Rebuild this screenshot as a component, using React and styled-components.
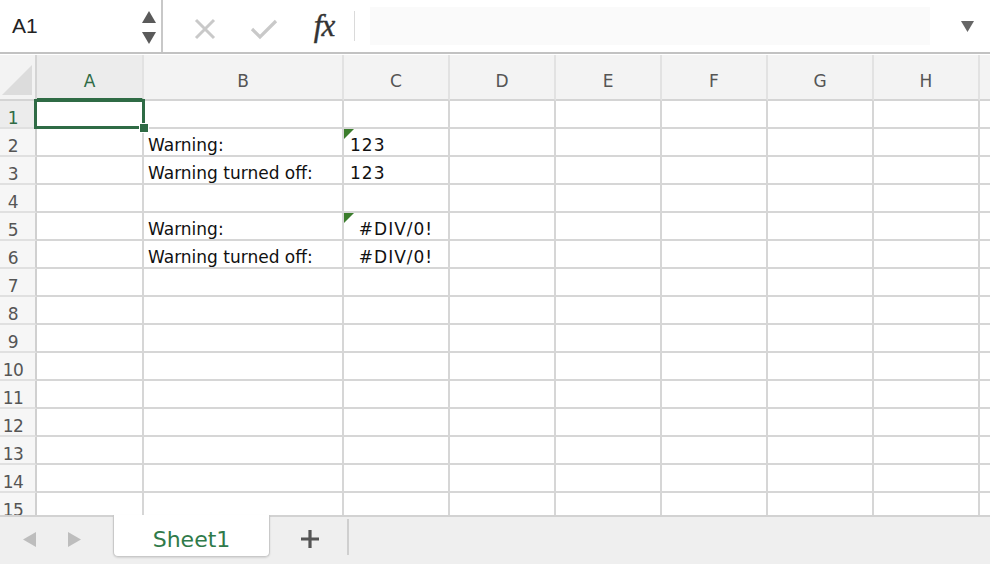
import React from "react";
import styled, { createGlobalStyle } from "styled-components";

const Global = createGlobalStyle`
  html, body { margin: 0; padding: 0; background: #fff; }
  body { font-family: "DejaVu Sans", "Noto Sans", sans-serif; }
  #root { width: 990px; height: 564px; }
`;

const Frame = styled.div`
  width: 990px;
  height: 564px;
  display: flex;
  flex-direction: column;
  overflow: hidden;
  background: #fff;
`;

const TopBar = styled.div`
  height: 52px;
  flex: none;
  display: flex;
  align-items: stretch;
  border-bottom: 2px solid #c2c2c2;
  position: relative;
  z-index: 3;
  box-shadow: 0 1px 0 #fff;
`;

const NameBox = styled.div`
  width: 163px;
  flex: none;
  display: flex;
  align-items: center;
  justify-content: space-between;
  padding: 0 5px 0 12px;
  box-sizing: border-box;
  border-right: 2px solid #c8c8c8;
  font-family: "Liberation Sans", "Noto Sans", sans-serif;
  font-size: 21px;
  color: #222;
`;

const Spinner = styled.div`
  display: flex;
  flex-direction: column;
  gap: 9px;
  padding-top: 2px;
`;

const FormulaTools = styled.div`
  display: flex;
  align-items: center;
  padding-left: 28px;
`;

const ToolIcon = styled.div`
  width: ${(p) => p.$w}px;
  display: flex;
  justify-content: center;
  align-items: center;
  padding-top: ${(p) => p.$pt || 0}px;
`;

const Fx = styled.span`
  font-family: "Liberation Serif", "DejaVu Serif", serif;
  font-style: italic;
  font-size: 31px;
  color: #333;
  letter-spacing: -1px;
  -webkit-text-stroke: 0.4px #333;
`;

const Divider = styled.div`
  width: 1px;
  align-self: center;
  height: 30px;
  background: #dadada;
  margin-left: 15px;
`;

const FormulaInput = styled.div`
  flex: 1;
  margin: 7px 0 7px 15px;
  background: #fafafa;
`;

const Dropdown = styled.div`
  width: 60px;
  display: flex;
  align-items: center;
  justify-content: center;
  padding-left: 14px;
  box-sizing: border-box;
`;

const SheetArea = styled.div`
  flex: 1;
  overflow: hidden;
  min-height: 0;
`;

const Grid = styled.div`
  display: grid;
  grid-template-columns: 37px 107px 200px 106px 106px 106px 106px 106px 106px 40px;
  grid-auto-rows: 28px;
  grid-template-rows: 47px;
`;

const Corner = styled.div`
  background: #f3f3f3;
  border-top: 1px solid #dcdcdc;
  border-right: 2px solid #d4d4d4;
  border-bottom: 2px solid #d4d4d4;
  box-sizing: border-box;
  display: flex;
  align-items: flex-end;
  justify-content: flex-end;
  padding: 0 3px 4px 0;
`;

const ColHead = styled.div`
  box-sizing: border-box;
  background: ${(p) => (p.$sel ? "#ececec" : "#f3f3f3")};
  border-top: 1px solid #dcdcdc;
  border-right: 2px solid #e2e2e2;
  border-bottom: ${(p) => (p.$sel ? "3px solid #2f6b45" : "2px solid #d4d4d4")};
  color: ${(p) => (p.$sel ? "#2f6b45" : "#555")};
  font-size: 17px;
  display: flex;
  align-items: center;
  justify-content: center;
  padding-top: ${(p) => (p.$sel ? 9 : 8)}px;
`;

const RowHead = styled.div`
  box-sizing: border-box;
  background: ${(p) => (p.$sel ? "#ececec" : "#f6f6f6")};
  border-right: 2px solid #d0d0d0;
  border-bottom: 2px solid #e0e0e0;
  color: ${(p) => (p.$sel ? "#2f6b45" : "#555")};
  font-size: 17px;
  display: flex;
  align-items: center;
  justify-content: center;
  padding: 7px 9px 0 0;
  letter-spacing: -0.5px;
`;

const Cell = styled.div`
  position: relative;
  box-sizing: border-box;
  border-right: 2px solid #d6d6d6;
  border-bottom: 2px solid #d6d6d6;
  font-size: 17px;
  color: #111;
  display: flex;
  align-items: center;
  justify-content: ${(p) => (p.$align === "center" ? "center" : "flex-start")};
  padding: 6px 0 0 ${(p) => (p.$align === "center" ? 0 : p.$pl || 4)}px;
  white-space: nowrap;
  letter-spacing: ${(p) => (p.$wide ? "1px" : "0")};
`;

const Selection = styled.div`
  position: absolute;
  z-index: 2;
  left: -3px;
  top: -2px;
  right: -3px;
  bottom: -2px;
  border: 3px solid #2f6b45;
  pointer-events: none;
`;

const Handle = styled.div`
  position: absolute;
  right: -7px;
  bottom: -7px;
  width: 8px;
  height: 8px;
  background: #2f6b45;
  border: 1px solid #fff;
`;

const ErrFlag = styled.div`
  position: absolute;
  left: 0;
  top: 0;
  width: 0;
  height: 0;
  border-top: 10px solid #3b7d2c;
  border-right: 10px solid transparent;
`;

const TabBar = styled.div`
  height: 49px;
  flex: none;
  display: flex;
  align-items: stretch;
  background: #efefef;
  position: relative;
`;

const TabLine = styled.div`
  position: absolute;
  left: 0;
  right: 0;
  top: 0;
  height: 2px;
  background: #d2d2d2;
`;

const NavArrows = styled.div`
  width: 113px;
  display: flex;
  align-items: center;
  padding-left: 23px;
  gap: 32px;
  box-sizing: border-box;
`;

const SheetTab = styled.div`
  position: relative;
  z-index: 1;
  width: 157px;
  height: 42px;
  box-sizing: border-box;
  background: #fff;
  border: 1px solid #c9c9c9;
  border-top: none;
  border-radius: 0 0 5px 5px;
  box-shadow: 0 1px 2px rgba(0, 0, 0, 0.12);
  display: flex;
  align-items: center;
  justify-content: center;
  color: #2f7a4a;
  font-size: 22px;
  padding-top: 7px;
`;

const AddTab = styled.div`
  width: 77px;
  display: flex;
  align-items: center;
  justify-content: center;
  padding-left: 3px;
  box-sizing: border-box;
  margin-top: -2px;
`;

const TabSep = styled.div`
  width: 2px;
  height: 36px;
  margin-top: 4px;
  background: #cfcfcf;
`;

const cols = ["A", "B", "C", "D", "E", "F", "G", "H", ""];

const data = {
  2: { B: "Warning:", C: { t: "123", flag: true, pl: 6 } },
  3: { B: "Warning turned off:", C: { t: "123", pl: 6 } },
  5: { B: "Warning:", C: { t: "#DIV/0!", flag: true, center: true } },
  6: { B: "Warning turned off:", C: { t: "#DIV/0!", center: true } },
};

function Tri({ dir, color, size = 12 }) {
  const pts = {
    up: `0,${size} ${size / 2 + 1},0 ${size + 2},${size}`,
    down: `0,0 ${size + 2},0 ${size / 2 + 1},${size}`,
    left: `${size},0 ${size},${size + 2} 0,${size / 2 + 1}`,
    right: `0,0 0,${size + 2} ${size},${size / 2 + 1}`,
  }[dir];
  const w = dir === "up" || dir === "down" ? size + 2 : size;
  const h = dir === "up" || dir === "down" ? size : size + 2;
  return (
    <svg width={w} height={h} viewBox={`0 0 ${w} ${h}`}>
      <polygon points={pts} fill={color} />
    </svg>
  );
}

export default function App() {
  const rows = Array.from({ length: 15 }, (_, i) => i + 1);
  return (
    <>
      <Global />
      <Frame>
        <TopBar>
          <NameBox>
            <span>A1</span>
            <Spinner>
              <Tri dir="up" color="#5a5a5a" size={12} />
              <Tri dir="down" color="#5a5a5a" size={12} />
            </Spinner>
          </NameBox>
          <FormulaTools>
            <ToolIcon $w={28} $pt={6}>
              <svg width="22" height="22" viewBox="0 0 22 22">
                <path d="M2 2 L20 20 M20 2 L2 20" stroke="#c9c9c9" strokeWidth="3" />
              </svg>
            </ToolIcon>
            <ToolIcon $w={90} $pt={6}>
              <svg width="28" height="22" viewBox="0 0 28 22">
                <path d="M2 11 L10 19 L26 3" stroke="#c9c9c9" strokeWidth="3.2" fill="none" />
              </svg>
            </ToolIcon>
            <ToolIcon $w={30}>
              <Fx>fx</Fx>
            </ToolIcon>
            <Divider />
          </FormulaTools>
          <FormulaInput />
          <Dropdown>
            <Tri dir="down" color="#666" size={11} />
          </Dropdown>
        </TopBar>

        <SheetArea>
          <Grid>
            <Corner>
              <svg width="30" height="30" viewBox="0 0 30 30">
                <polygon points="0,30 30,0 30,30" fill="#dcdcdc" />
              </svg>
            </Corner>
            {cols.map((c, i) => (
              <ColHead key={i} $sel={c === "A"}>
                {c}
              </ColHead>
            ))}
            {rows.map((r) => (
              <React.Fragment key={r}>
                <RowHead $sel={r === 1}>{r}</RowHead>
                {cols.map((c, i) => {
                  const d = data[r] && data[r][c];
                  const obj = typeof d === "string" ? { t: d } : d;
                  return (
                    <Cell
                      key={i}
                      $align={obj && obj.center ? "center" : "left"}
                      $pl={obj && obj.pl}
                      $wide={c === "C"}
                    >
                      {obj && obj.flag && <ErrFlag />}
                      {obj && obj.t}
                      {r === 1 && c === "A" && (
                        <Selection>
                          <Handle />
                        </Selection>
                      )}
                    </Cell>
                  );
                })}
              </React.Fragment>
            ))}
          </Grid>
        </SheetArea>

        <TabBar>
          <TabLine />
          <NavArrows>
            <Tri dir="left" color="#bdbdbd" size={13} />
            <Tri dir="right" color="#bdbdbd" size={13} />
          </NavArrows>
          <SheetTab>Sheet1</SheetTab>
          <AddTab>
            <svg width="20" height="20" viewBox="0 0 20 20">
              <path d="M10 1 V19 M1 10 H19" stroke="#555" strokeWidth="3.2" />
            </svg>
          </AddTab>
          <TabSep />
        </TabBar>
      </Frame>
    </>
  );
}
